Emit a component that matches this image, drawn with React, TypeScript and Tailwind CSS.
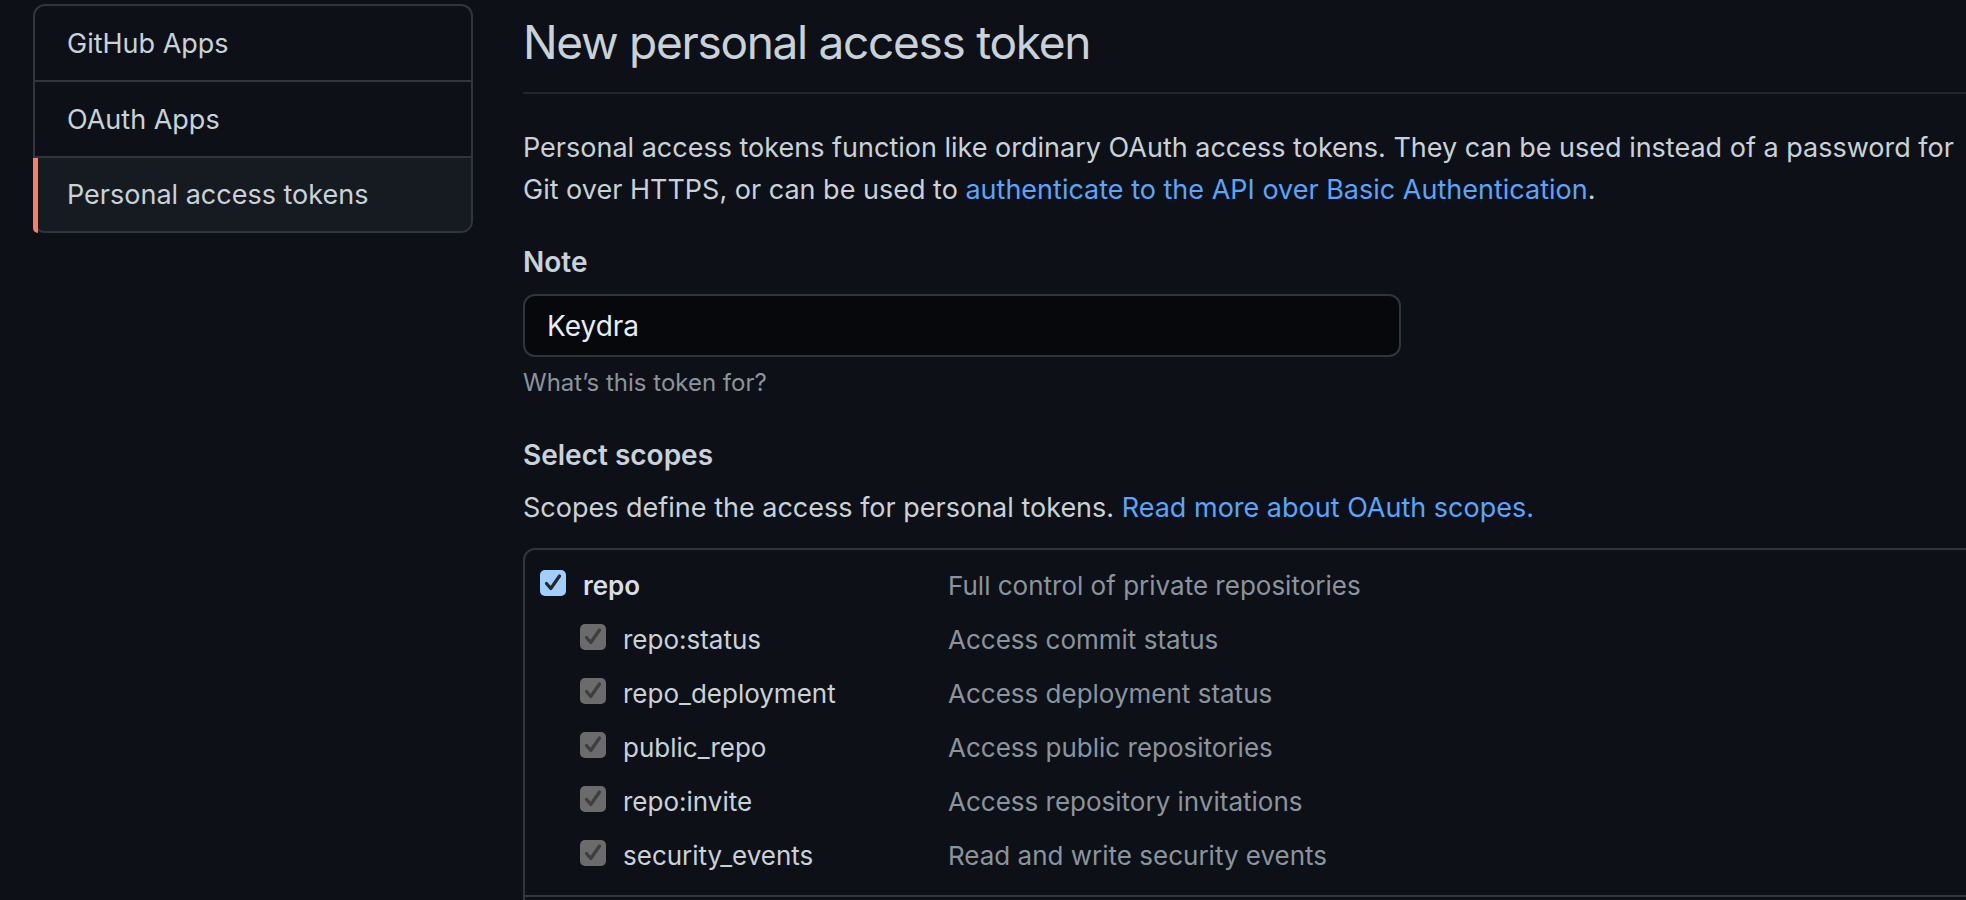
import React from "react";

type Scope = { name: string; desc: string; sub?: boolean; bold?: boolean };

const scopes: Scope[] = [
  { name: "repo", desc: "Full control of private repositories", bold: true },
  { name: "repo:status", desc: "Access commit status", sub: true },
  { name: "repo_deployment", desc: "Access deployment status", sub: true },
  { name: "public_repo", desc: "Access public repositories", sub: true },
  { name: "repo:invite", desc: "Access repository invitations", sub: true },
  { name: "security_events", desc: "Read and write security events", sub: true },
];

function Check({ primary }: { primary: boolean }) {
  return (
    <span
      className={
        primary
          ? "mt-[5px] flex h-[26px] w-[26px] shrink-0 items-center justify-center rounded-[5px] bg-[#a1ceff]"
          : "mt-[5px] flex h-[26px] w-[26px] shrink-0 items-center justify-center rounded-[5px] bg-[#6b6b6b]"
      }
    >
      <svg width="26" height="26" viewBox="0 0 26 26" fill="none">
        <path
          d="M6.5 13.5 L10.8 18.5 L19.5 6"
          stroke={primary ? "#24282e" : "#3e3e3e"}
          strokeWidth="3.2"
          strokeLinecap="round"
          strokeLinejoin="round"
        />
      </svg>
    </span>
  );
}

function ScopeRow({ s }: { s: Scope }) {
  return (
    <div className="flex h-[42px] items-start">
      <div className="flex w-[408px] shrink-0 items-start">
        {s.sub && <span className="w-[40px] shrink-0" />}
        <Check primary={!s.sub} />
        <span
          className={
            s.bold
              ? "ml-[17px] text-[26px] font-semibold leading-[42px] text-[#d8dee4]"
              : "ml-[17px] text-[26px] leading-[42px] text-[#c9d1d9]"
          }
        >
          {s.name}
        </span>
      </div>
      <span className="whitespace-nowrap text-[26px] leading-[42px] text-[#8b949e]">{s.desc}</span>
    </div>
  );
}

export default function App() {
  return (
    <div className="flex h-[900px] w-[1966px] items-start gap-[50px] overflow-hidden bg-[#0d1117] pl-[33px] font-['Inter',sans-serif] text-[#c9d1d9]">
      <nav className="relative mt-[4px] w-[440px] shrink-0 rounded-[12px] border-2 border-[#30363d]">
        <div className="flex h-[76px] items-center border-b-2 border-[#30363d] pl-[32px] pt-[2px] text-[27px] text-[#c9d1d9]">
          GitHub Apps
        </div>
        <div className="flex h-[76px] items-center border-b-2 border-[#30363d] pl-[32px] pt-[2px] text-[27px] text-[#c9d1d9]">
          OAuth Apps
        </div>
        <div className="relative flex h-[73px] items-center rounded-b-[10px] bg-[#161b22] pl-[32px] pt-[2px] text-[27px] text-[#c9d1d9]">
          <span className="absolute bottom-[-2px] left-[-2px] top-0 w-[5px] rounded-bl-[12px] bg-[#f78166]" />
          Personal access tokens
        </div>
      </nav>

      <main className="w-[1500px] shrink-0">
        <div className="mt-[6px] border-b-2 border-[#21262d] pb-[14px]">
          <h1 className="text-[46px] font-normal leading-[72px] tracking-[-1.3px] text-[#c9d1d9]">
            New personal access token
          </h1>
        </div>

        <p className="mt-[33px] whitespace-nowrap text-[27px] leading-[42px]">
          Personal access tokens function like ordinary OAuth access tokens. They can be used instead of a password for
          <br />
          Git over HTTPS, or can be used to{" "}
          <a className="text-[#58a6ff]">authenticate to the API over Basic Authentication</a>.
        </p>

        <div className="mt-[30px] text-[28px] font-semibold leading-[42px]">Note</div>
        <div className="mt-[11px] flex h-[63px] w-[878px] items-center rounded-[12px] border-2 border-[#30363d] bg-[#06080c] pl-[22px] text-[28px] text-[#e6edf3]">
          Keydra
        </div>
        <div className="mt-[8px] text-[24px] leading-[36px] text-[#8b949e]">What’s this token for?</div>

        <div className="mt-[33px] text-[28px] font-semibold leading-[42px]">Select scopes</div>
        <p className="mt-[11px] whitespace-nowrap text-[27px] leading-[42px]">
          Scopes define the access for personal tokens.{" "}
          <a className="text-[#58a6ff]">Read more about OAuth scopes.</a>
        </p>

        <div className="mt-[19px] rounded-[12px] border-2 border-[#30363d]">
          <div className="flex flex-col gap-[12px] pb-[18px] pl-[15px] pt-[15px]">
            {scopes.map((s) => (
              <ScopeRow key={s.name} s={s} />
            ))}
          </div>
          <div className="h-[60px] border-t-2 border-[#30363d]" />
        </div>
      </main>
    </div>
  );
}
